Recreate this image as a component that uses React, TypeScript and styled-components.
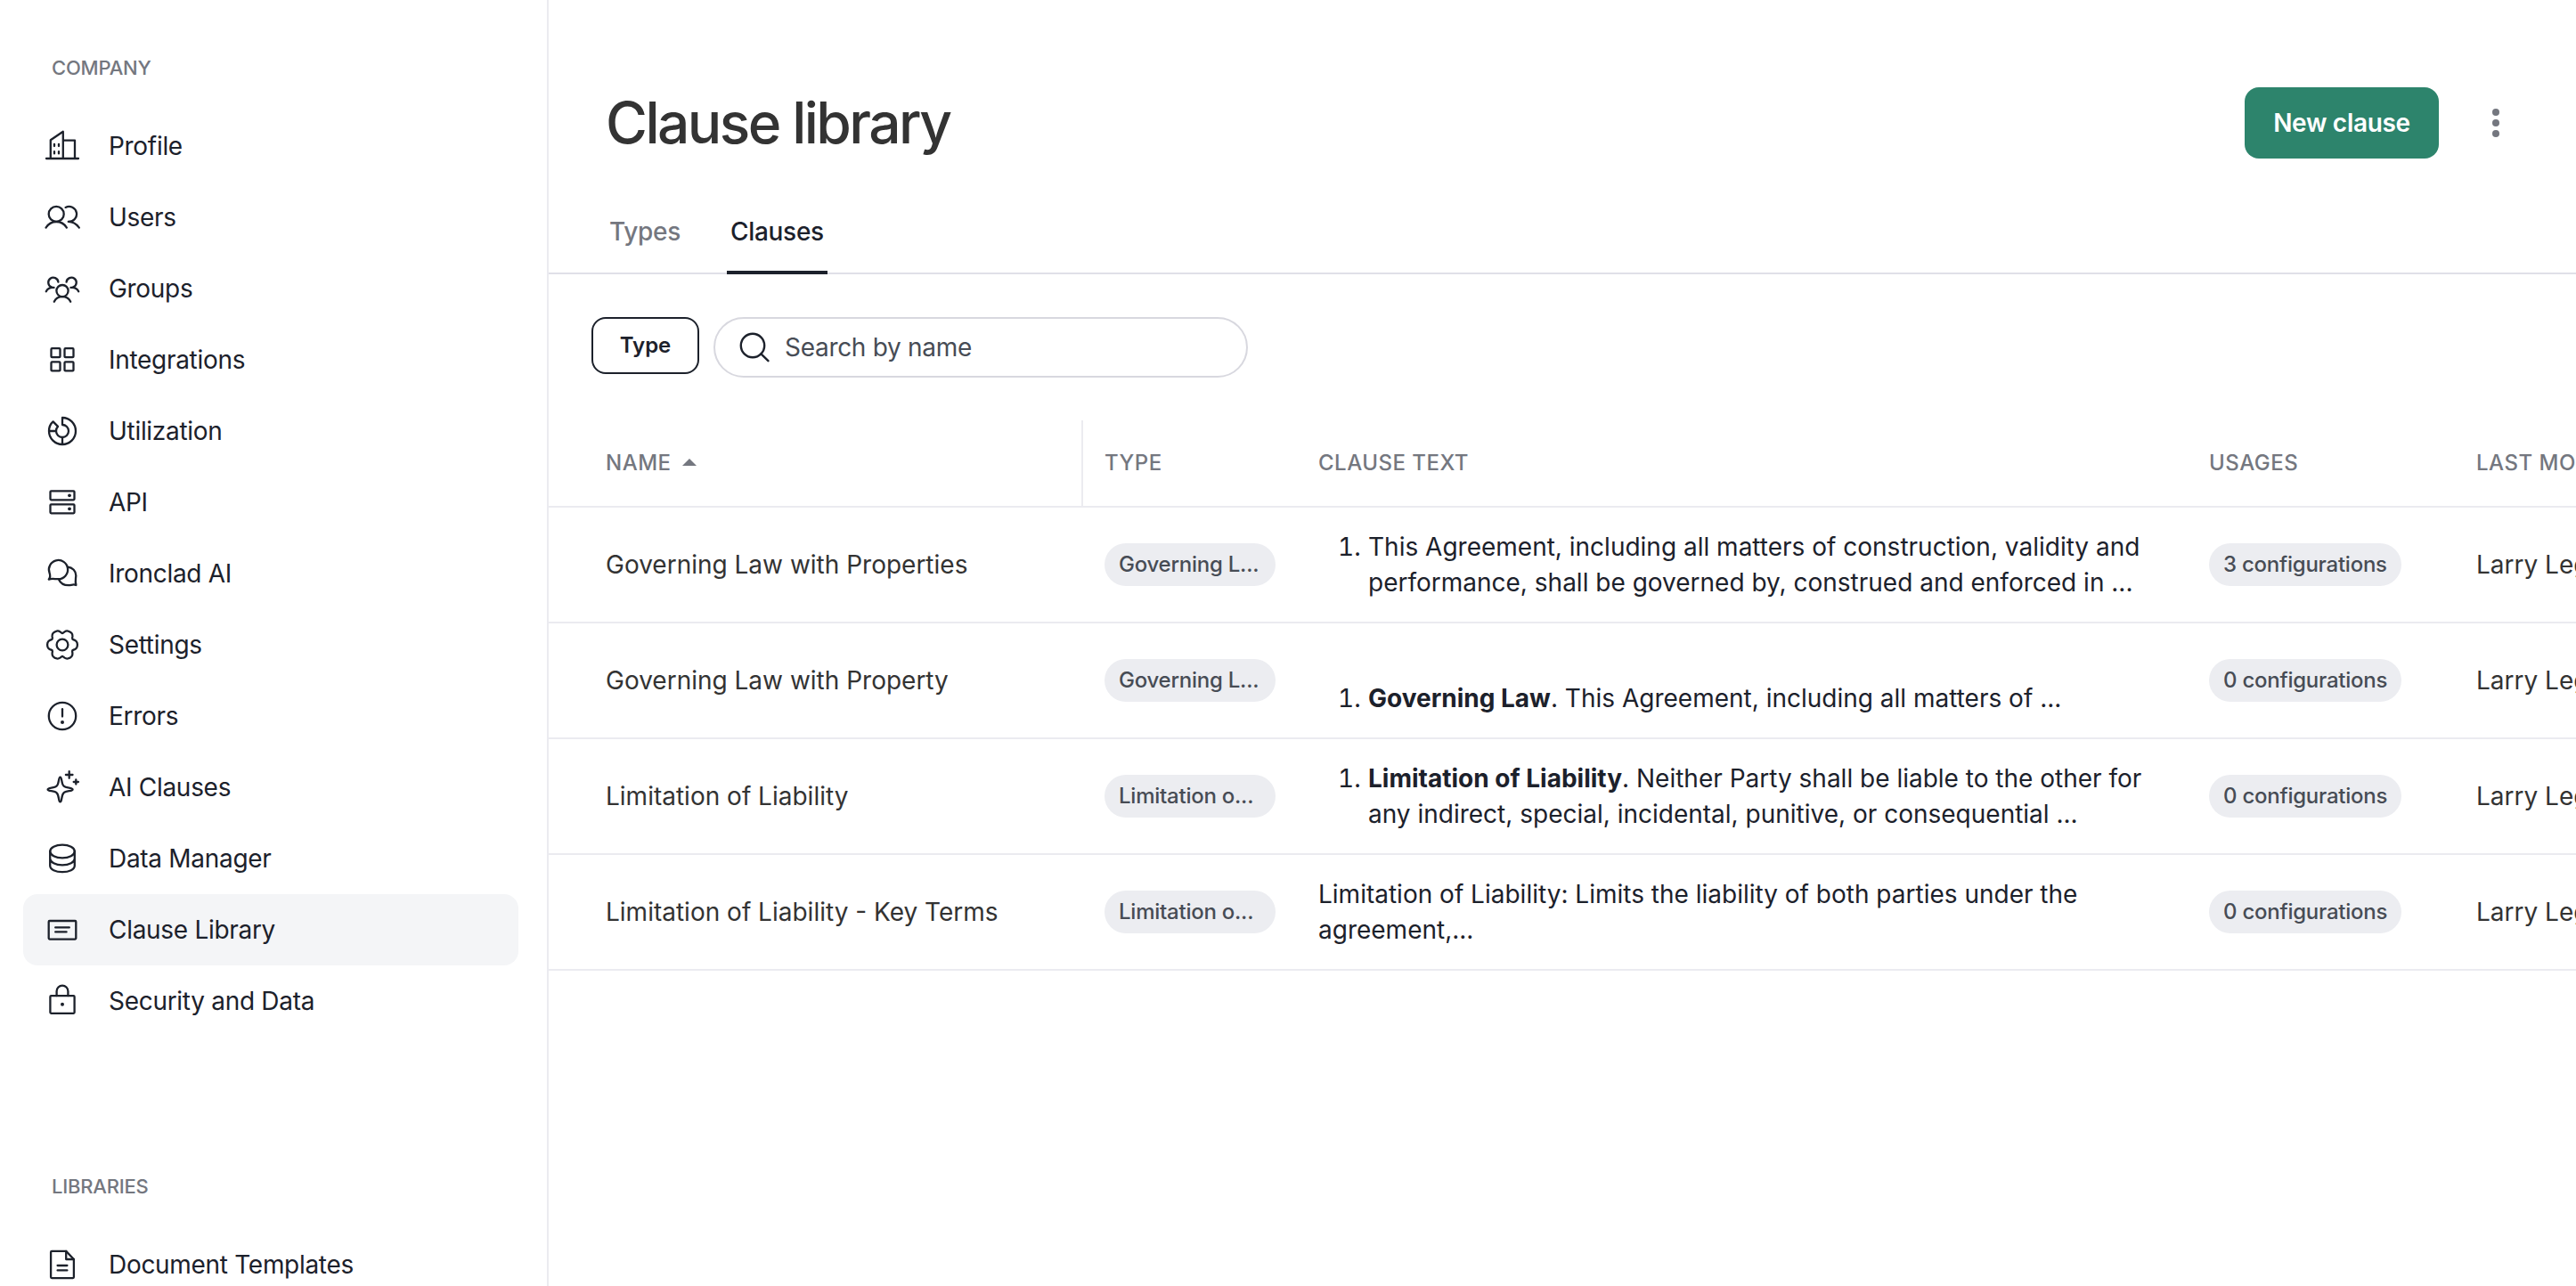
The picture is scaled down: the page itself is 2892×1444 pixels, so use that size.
import React from "react";
import styled, { createGlobalStyle } from "styled-components";

const ink = "#1c212b";
const body = "#333333";
const muted = "#74777f";
const line = "#ebebf0";

const GlobalStyle = createGlobalStyle`
  * { box-sizing: border-box; }
  html, body { margin: 0; background: #fff; overflow: hidden; }
  body {
    font-family: Inter, "Liberation Sans", sans-serif;
    font-size: 28px;
    color: ${ink};
    -webkit-font-smoothing: antialiased;
  }
`;

const Page = styled.div`
  display: flex;
  width: 2892px;
  height: 1444px;
  overflow: hidden;
`;

const Sidebar = styled.nav`
  flex: 0 0 616px;
  padding: 60px 32px 0 26px;
  border-right: 2px solid ${line};
  overflow: hidden;
`;

const NavSection = styled.section`
  & + & { margin-top: 152px; }
`;

const NavHeading = styled.h2`
  margin: 0 0 32px;
  padding-left: 32px;
  font-size: 22px;
  line-height: 32px;
  font-weight: 500;
  letter-spacing: -0.22px;
  color: ${muted};
  text-transform: uppercase;
`;

const NavItem = styled.a<{ $active?: boolean }>`
  display: flex;
  align-items: center;
  gap: 32px;
  height: 80px;
  padding-left: 24px;
  border-radius: 16px;
  line-height: 40px;
  letter-spacing: -0.3px;
  background: ${(p) => (p.$active ? "#f4f5f7" : "transparent")};
`;

const Glyph = styled.svg`
  width: 40px;
  height: 40px;
  flex: none;
  fill: none;
  stroke: ${ink};
  stroke-width: 2.3;
  stroke-linecap: round;
  stroke-linejoin: round;
  overflow: visible;
  .dot { fill: ${ink}; stroke: none; }
`;

const Main = styled.main`
  flex: 1;
  min-width: 0;
  overflow: hidden;
`;

const Header = styled.header`
  display: flex;
  align-items: center;
  justify-content: space-between;
  height: 80px;
  margin-top: 98px;
  padding: 0 66px 0 64px;
`;

const Title = styled.h1`
  margin: 0;
  font-size: 64px;
  line-height: 80px;
  font-weight: 500;
  letter-spacing: -2.55px;
  color: ${body};
`;

const Actions = styled.div`
  display: flex;
  align-items: center;
  gap: 40px;
`;

const PrimaryButton = styled.button`
  width: 218px;
  height: 80px;
  padding: 0;
  border: 0;
  border-radius: 16px;
  background: #2d846c;
  color: #fff;
  font: 600 28px/40px Inter, "Liberation Sans", sans-serif;
  letter-spacing: -0.3px;
`;

const MoreButton = styled.button`
  display: grid;
  place-items: center;
  width: 48px;
  height: 48px;
  padding: 0;
  border: 0;
  background: none;
  svg { width: 8px; height: 32px; fill: ${muted}; }
`;

const Tabs = styled.div`
  display: flex;
  gap: 48px;
  height: 130px;
  padding-left: 64px;
  letter-spacing: -0.3px;
  box-shadow: inset 0 -2px #e0e0e8;
`;

const Tab = styled.div<{ $active?: boolean }>`
  padding: 62px 4px 0;
  line-height: 40px;
  font-weight: 500;
  color: ${(p) => (p.$active ? ink : muted)};
  box-shadow: ${(p) => (p.$active ? `inset 0 -4px ${ink}` : "none")};
`;

const Filters = styled.div`
  display: flex;
  align-items: flex-start;
  gap: 16px;
  padding: 48px 48px;
`;

const FilterButton = styled.button`
  width: 121px;
  height: 64px;
  padding: 0 0 1px;
  border: 2px solid ${ink};
  border-radius: 16px;
  background: #fff;
  color: ${ink};
  font: 600 24px/32px Inter, "Liberation Sans", sans-serif;
`;

const SearchField = styled.label`
  display: flex;
  align-items: center;
  gap: 17px;
  width: 600px;
  height: 68px;
  padding-left: 27px;
  border: 2px solid #d8d8df;
  border-radius: 34px;
  color: #474c55;
  line-height: 40px;
  letter-spacing: -0.3px;
  svg { width: 34px; height: 34px; fill: none; stroke: ${ink}; stroke-width: 2.4; stroke-linecap: round; }
`;

const columns = "600px 240px 1000px 300px 1fr";

const HeadRow = styled.div`
  display: grid;
  grid-template-columns: ${columns};
  height: 98px;
  border-bottom: 2px solid ${line};
`;

const HeadCell = styled.div<{ $first?: boolean }>`
  display: flex;
  align-items: center;
  gap: 12px;
  padding-left: ${(p) => (p.$first ? 64 : 24)}px;
  border-right: ${(p) => (p.$first ? `2px solid ${line}` : "none")};
  font-size: 24px;
  line-height: 32px;
  font-weight: 500;
  letter-spacing: 0.5px;
  white-space: nowrap;
  color: ${muted};
  text-transform: uppercase;
`;

const SortArrow = styled.span`
  width: 0;
  height: 0;
  margin-bottom: 2px;
  border: 8px solid transparent;
  border-top: 0;
  border-bottom: 8px solid ${muted};
`;

const Row = styled.div`
  display: grid;
  grid-template-columns: ${columns};
  align-items: center;
  height: 130px;
  border-bottom: 2px solid ${line};
`;

const Cell = styled.div<{ $first?: boolean }>`
  padding-left: ${(p) => (p.$first ? 64 : 24)}px;
  line-height: 40px;
  white-space: nowrap;
  color: ${body};
`;

const Chip = styled.span<{ $width: number }>`
  display: block;
  width: ${(p) => p.$width}px;
  height: 48px;
  padding: 0 16px;
  border-radius: 24px;
  background: #ecedf1;
  color: #474c55;
  font-size: 24px;
  line-height: 48px;
  font-weight: 500;
  letter-spacing: -0.24px;
`;

const ClauseText = styled.div<{ $numbered?: boolean }>`
  display: flex;
  align-items: flex-end;
  gap: 8px;
  height: 80px;
  padding-left: ${(p) => (p.$numbered ? 22 : 0)}px;
  color: ${ink};
  line-height: 40px;
  b { font-weight: 700; }
`;

const Marker = styled.span<{ $lines: number }>`
  width: 26px;
  height: ${(p) => p.$lines * 40}px;
  font-variant-numeric: tabular-nums;
`;

const polar = (deg: number, r: number) => {
  const a = (deg * Math.PI) / 180;
  return `${(20 + r * Math.cos(a)).toFixed(2)} ${(20 + r * Math.sin(a)).toFixed(2)}`;
};
const gear =
  [0, 60, 120, 180, 240, 300]
    .map(
      (t, i) =>
        `${i ? "L" : "M"}${polar(t - 26, 13.4)}L${polar(t - 20, 14.9)}Q${polar(t - 15, 16.4)} ${polar(t - 8, 16.7)}` +
        `Q${polar(t, 17.3)} ${polar(t + 8, 16.7)}Q${polar(t + 15, 16.4)} ${polar(t + 20, 14.9)}L${polar(t + 26, 13.4)}` +
        `Q${polar(t + 30, 12.6)} ${polar(t + 34, 13.4)}`
    )
    .join("") + "Z";

const icons = {
  building: (
    <>
      <path d="M2 34H38M6.8 34V13.2L20.8 3.8V34M20.8 13.6H34V34" />
      <path d="M11 17.8V20M16 17.8V20M11 26.2V28.4M16 26.2V28.4" />
    </>
  ),
  users: (
    <>
      <circle cx="13.2" cy="16.4" r="8.5" />
      <path d="M1.6 31.6C4.2 27.6 8.5 25 13.2 25S22.4 27.6 24.8 31.6" />
      <path d="M23.6 8.9A8.5 8.5 0 1 1 26.8 24.9C31.8 25 36 27.6 38.8 31.6" />
    </>
  ),
  groups: (
    <>
      <circle cx="20" cy="22.6" r="6.6" />
      <path d="M10.8 34.8C12.4 31.4 16 29.2 20 29.2S27.6 31.4 29.2 34.8" />
      <path d="M15.4 12.6A5.6 5.6 0 1 0 7.6 18.4M10.6 18.9C6.6 18.4 3.4 20 1.8 23.2" />
      <path d="M24.6 12.6A5.6 5.6 0 1 1 32.4 18.4M29.4 18.9C33.4 18.4 36.6 20 38.2 23.2" />
    </>
  ),
  grid: (
    <>
      <rect x="7.5" y="7.2" width="10" height="10" rx="1" />
      <rect x="22.5" y="7.2" width="10" height="10" rx="1" />
      <rect x="7.5" y="22.4" width="10" height="10" rx="1" />
      <rect x="22.5" y="22.4" width="10" height="10" rx="1" />
    </>
  ),
  donut: (
    <path d="M20 5A15 15 0 1 1 5 20C5 15.6 6.8 11.8 9.6 9.4L15 14.9A7 7 0 0 0 13 20H5M13 20A7 7 0 1 0 20 13V5M20 27V35" />
  ),
  servers: (
    <>
      <rect x="6.5" y="7.3" width="27" height="10" rx="1" />
      <rect x="6.5" y="22.3" width="27" height="10" rx="1" />
      <circle className="dot" cx="28" cy="12.3" r="1.9" />
      <circle className="dot" cx="28" cy="27.3" r="1.9" />
    </>
  ),
  chat: (
    <>
      <path d="M4.8 26.6C6.6 24.4 6.4 21.6 5.6 19.4A10.6 10.6 0 1 1 15.4 26.2C12 26.4 8.4 25.2 4.8 26.6Z" />
      <path d="M26 12.6C31.5 13.2 35.3 17.2 35.3 22.2C35.2 25.6 34 29 35.4 33C32.6 31.4 30 33.2 27 33.2C21.8 33.2 17.8 30.8 15.8 26.2" />
    </>
  ),
  gear: (
    <>
      <path d={gear} />
      <circle cx="20" cy="20" r="6.4" />
    </>
  ),
  alert: (
    <>
      <circle cx="20" cy="20" r="15.2" />
      <path d="M20 12.2V20.6" />
      <circle className="dot" cx="20" cy="27" r="2" />
    </>
  ),
  sparkle: (
    <>
      <path d="M17.6 8.6C19.8 8.6 18.6 16 21.5 18.5C24 21.2 31.6 20.2 31.6 22.4S24 23.6 21.5 26.3C18.6 28.8 19.8 36.4 17.6 36.4S16.6 28.8 13.7 26.3C11.2 23.6 3.6 24.6 3.6 22.4S11.2 21.2 13.7 18.5C16.6 16 15.4 8.6 17.6 8.6Z" />
      <path d="M27.7 2.2V9.8M23.9 6H31.5M35.3 11.4V16.6M32.7 14H37.9" />
    </>
  ),
  database: (
    <>
      <ellipse cx="20" cy="12" rx="13.8" ry="7.4" />
      <path d="M6.2 12V28C6.2 32.2 12.4 35.2 20 35.2S33.8 32.2 33.8 28V12M6.2 20C6.2 24.2 12.4 27.4 20 27.4S33.8 24.2 33.8 20" />
    </>
  ),
  card: (
    <>
      <rect x="4.7" y="10" width="30.6" height="20.6" rx="1" />
      <path d="M12.2 17.4H27.8M12.2 22.4H24.6" />
    </>
  ),
  lock: (
    <>
      <rect x="6.4" y="14.2" width="27.2" height="19.6" rx="1" />
      <path d="M13.6 14V9A6.4 6.4 0 0 1 26.4 9V14" />
      <circle className="dot" cx="20" cy="23.7" r="2" />
    </>
  ),
  document: (
    <>
      <path d="M8.4 4.9H24.2L32.9 14V34.1A1 1 0 0 1 31.9 35.1H8.1A1 1 0 0 1 7.1 34.1V5.9A1 1 0 0 1 8.1 4.9Z" />
      <path d="M24.2 4.9V14H32.9M14.6 21H25.4M14.6 26.4H25.4" />
    </>
  ),
};

type IconName = keyof typeof icons;

const sections: { title: string; items: [IconName, string][] }[] = [
  {
    title: "Company",
    items: [
      ["building", "Profile"],
      ["users", "Users"],
      ["groups", "Groups"],
      ["grid", "Integrations"],
      ["donut", "Utilization"],
      ["servers", "API"],
      ["chat", "Ironclad AI"],
      ["gear", "Settings"],
      ["alert", "Errors"],
      ["sparkle", "AI Clauses"],
      ["database", "Data Manager"],
      ["card", "Clause Library"],
      ["lock", "Security and Data"],
    ],
  },
  { title: "Libraries", items: [["document", "Document Templates"]] },
];

const rows = [
  {
    name: "Governing Law with Properties",
    type: "Governing L...",
    usages: "3 configurations",
    numbered: true,
    lines: [
      <>This Agreement, including all matters of construction, validity and</>,
      <>performance, shall be governed by, construed and enforced in ...</>,
    ],
  },
  {
    name: "Governing Law with Property",
    type: "Governing L...",
    usages: "0 configurations",
    numbered: true,
    lines: [
      <>
        <b>Governing Law</b>. This Agreement, including all matters of ...
      </>,
    ],
  },
  {
    name: "Limitation of Liability",
    type: "Limitation o...",
    usages: "0 configurations",
    numbered: true,
    lines: [
      <>
        <b>Limitation of Liability</b>. Neither Party shall be liable to the other for
      </>,
      <>any indirect, special, incidental, punitive, or consequential ...</>,
    ],
  },
  {
    name: "Limitation of Liability - Key Terms",
    type: "Limitation o...",
    usages: "0 configurations",
    numbered: false,
    lines: [<>Limitation of Liability: Limits the liability of both parties under the</>, <>agreement,...</>],
  },
];

export default function App() {
  return (
    <>
      <GlobalStyle />
      <Page>
        <Sidebar>
          {sections.map((s) => (
            <NavSection key={s.title}>
              <NavHeading>{s.title}</NavHeading>
              {s.items.map(([icon, label]) => (
                <NavItem key={label} $active={label === "Clause Library"}>
                  <Glyph viewBox="0 0 40 40">{icons[icon]}</Glyph>
                  {label}
                </NavItem>
              ))}
            </NavSection>
          ))}
        </Sidebar>
        <Main>
          <Header>
            <Title>Clause library</Title>
            <Actions>
              <PrimaryButton>New clause</PrimaryButton>
              <MoreButton aria-label="More">
                <svg viewBox="0 0 8 32">
                  <circle cx="4" cy="4" r="4" />
                  <circle cx="4" cy="16" r="4" />
                  <circle cx="4" cy="28" r="4" />
                </svg>
              </MoreButton>
            </Actions>
          </Header>
          <Tabs>
            <Tab>Types</Tab>
            <Tab $active>Clauses</Tab>
          </Tabs>
          <Filters>
            <FilterButton>Type</FilterButton>
            <SearchField>
              <svg viewBox="0 0 34 34">
                <circle cx="15" cy="15" r="13.2" />
                <path d="M24.4 24.4L32.4 32.2" />
              </svg>
              Search by name
            </SearchField>
          </Filters>
          <HeadRow>
            <HeadCell $first>
              Name <SortArrow />
            </HeadCell>
            <HeadCell>Type</HeadCell>
            <HeadCell>Clause text</HeadCell>
            <HeadCell>Usages</HeadCell>
            <HeadCell>Last mo</HeadCell>
          </HeadRow>
          {rows.map((r) => (
            <Row key={r.name}>
              <Cell $first>{r.name}</Cell>
              <Cell>
                <Chip $width={192}>{r.type}</Chip>
              </Cell>
              <Cell>
                <ClauseText $numbered={r.numbered}>
                  {r.numbered && <Marker $lines={r.lines.length}>1.</Marker>}
                  <div>
                    {r.lines.map((l, i) => (
                      <div key={i}>{l}</div>
                    ))}
                  </div>
                </ClauseText>
              </Cell>
              <Cell>
                <Chip $width={216}>{r.usages}</Chip>
              </Cell>
              <Cell>Larry Leg</Cell>
            </Row>
          ))}
        </Main>
      </Page>
    </>
  );
}
